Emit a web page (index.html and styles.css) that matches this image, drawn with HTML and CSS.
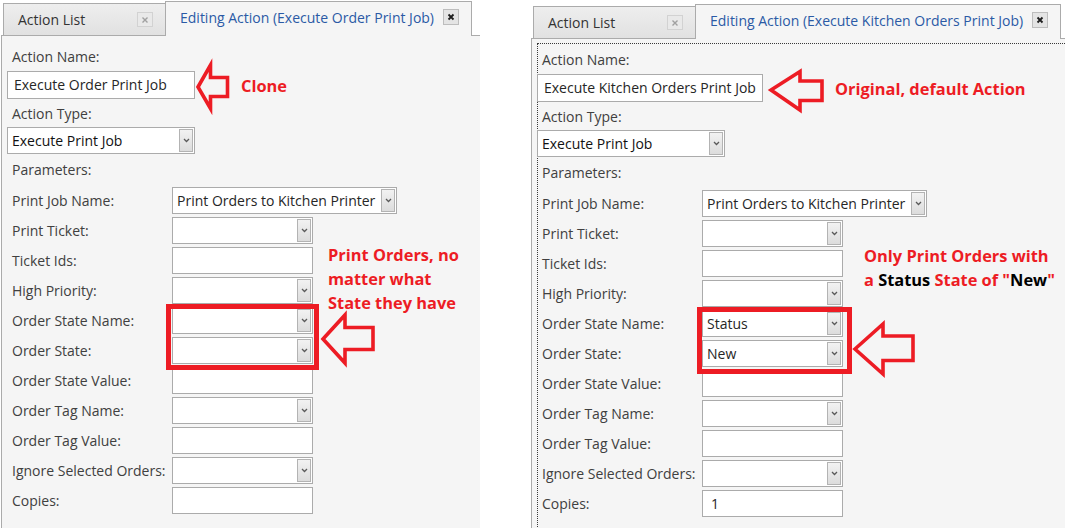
FILE: index.html
```html
<!DOCTYPE html>
<html>
<head>
<meta charset="utf-8">
<link rel="stylesheet" href="styles.css">
</head>
<body>
<div class="screen">
  <section class="panel panel-left">
    <div class="tabs">
      <div class="tab">Action List<span class="close"><svg width="8" height="8" viewBox="0 0 8 8"><path d="M1.5 1.5 L6.5 6.5 M6.5 1.5 L1.5 6.5"/></svg></span></div>
      <div class="tab active">Editing Action (Execute Order Print Job)<span class="close"><svg width="8" height="8" viewBox="0 0 8 8"><path d="M1.5 1.5 L6.5 6.5 M6.5 1.5 L1.5 6.5"/></svg></span></div>
    </div>
    <div class="content">
      <div class="form">
        <div class="lbl first">Action Name:</div>
        <div class="textbox">Execute Order Print Job</div>
        <div class="lbl">Action Type:</div>
        <div class="combo type"><span class="val dark">Execute Print Job</span><span class="btn"><svg width="7" height="5" viewBox="0 0 7 5"><path d="M1 1 L3.5 3.5 L6 1"/></svg></span></div>
        <div class="lbl params-title">Parameters:</div>
        <div class="params">
          <div class="plabel">Print Job Name:</div>
          <div class="combo wide"><span class="val">Print Orders to Kitchen Printer</span><span class="btn"><svg width="7" height="5" viewBox="0 0 7 5"><path d="M1 1 L3.5 3.5 L6 1"/></svg></span></div>
          <div class="plabel">Print Ticket:</div>
          <div class="combo"><span class="val"></span><span class="btn"><svg width="7" height="5" viewBox="0 0 7 5"><path d="M1 1 L3.5 3.5 L6 1"/></svg></span></div>
          <div class="plabel">Ticket Ids:</div>
          <div class="field"></div>
          <div class="plabel">High Priority:</div>
          <div class="combo"><span class="val"></span><span class="btn"><svg width="7" height="5" viewBox="0 0 7 5"><path d="M1 1 L3.5 3.5 L6 1"/></svg></span></div>
          <div class="plabel">Order State Name:</div>
          <div class="combo"><span class="val"></span><span class="btn"><svg width="7" height="5" viewBox="0 0 7 5"><path d="M1 1 L3.5 3.5 L6 1"/></svg></span></div>
          <div class="plabel">Order State:</div>
          <div class="combo"><span class="val"></span><span class="btn"><svg width="7" height="5" viewBox="0 0 7 5"><path d="M1 1 L3.5 3.5 L6 1"/></svg></span></div>
          <div class="plabel">Order State Value:</div>
          <div class="field"></div>
          <div class="plabel">Order Tag Name:</div>
          <div class="combo"><span class="val"></span><span class="btn"><svg width="7" height="5" viewBox="0 0 7 5"><path d="M1 1 L3.5 3.5 L6 1"/></svg></span></div>
          <div class="plabel">Order Tag Value:</div>
          <div class="field"></div>
          <div class="plabel">Ignore Selected Orders:</div>
          <div class="combo"><span class="val"></span><span class="btn"><svg width="7" height="5" viewBox="0 0 7 5"><path d="M1 1 L3.5 3.5 L6 1"/></svg></span></div>
          <div class="plabel">Copies:</div>
          <div class="field"></div>
        </div>
      </div>
    </div>
    <svg class="overlay" width="480" height="528" viewBox="0 0 480 528">
      <rect x="168.5" y="306.5" width="148" height="61"/>
      <polygon points="198,87 210.5,65 210.5,77.5 227.5,77.5 227.5,96.5 210.5,96.5 210.5,108.5"/>
      <polygon points="323,339 345,315 345,327.5 373,327.5 373,349.5 345,349.5 345,363"/>
    </svg>
    <div class="note note-clone">Clone</div>
    <div class="note note-left">Print Orders, no<br>matter what<br>State they have</div>
  </section>

  <section class="panel panel-right">
    <div class="tabs">
      <div class="tab">Action List<span class="close"><svg width="8" height="8" viewBox="0 0 8 8"><path d="M1.5 1.5 L6.5 6.5 M6.5 1.5 L1.5 6.5"/></svg></span></div>
      <div class="tab active">Editing Action (Execute Kitchen Orders Print Job)<span class="close"><svg width="8" height="8" viewBox="0 0 8 8"><path d="M1.5 1.5 L6.5 6.5 M6.5 1.5 L1.5 6.5"/></svg></span></div>
    </div>
    <div class="content">
      <div class="form focused">
        <div class="lbl first">Action Name:</div>
        <div class="textbox">Execute Kitchen Orders Print Job</div>
        <div class="lbl">Action Type:</div>
        <div class="combo type"><span class="val dark">Execute Print Job</span><span class="btn"><svg width="7" height="5" viewBox="0 0 7 5"><path d="M1 1 L3.5 3.5 L6 1"/></svg></span></div>
        <div class="lbl params-title">Parameters:</div>
        <div class="params">
          <div class="plabel">Print Job Name:</div>
          <div class="combo wide"><span class="val">Print Orders to Kitchen Printer</span><span class="btn"><svg width="7" height="5" viewBox="0 0 7 5"><path d="M1 1 L3.5 3.5 L6 1"/></svg></span></div>
          <div class="plabel">Print Ticket:</div>
          <div class="combo"><span class="val"></span><span class="btn"><svg width="7" height="5" viewBox="0 0 7 5"><path d="M1 1 L3.5 3.5 L6 1"/></svg></span></div>
          <div class="plabel">Ticket Ids:</div>
          <div class="field"></div>
          <div class="plabel">High Priority:</div>
          <div class="combo"><span class="val"></span><span class="btn"><svg width="7" height="5" viewBox="0 0 7 5"><path d="M1 1 L3.5 3.5 L6 1"/></svg></span></div>
          <div class="plabel">Order State Name:</div>
          <div class="combo"><span class="val">Status</span><span class="btn"><svg width="7" height="5" viewBox="0 0 7 5"><path d="M1 1 L3.5 3.5 L6 1"/></svg></span></div>
          <div class="plabel">Order State:</div>
          <div class="combo"><span class="val">New</span><span class="btn"><svg width="7" height="5" viewBox="0 0 7 5"><path d="M1 1 L3.5 3.5 L6 1"/></svg></span></div>
          <div class="plabel">Order State Value:</div>
          <div class="field"></div>
          <div class="plabel">Order Tag Name:</div>
          <div class="combo"><span class="val"></span><span class="btn"><svg width="7" height="5" viewBox="0 0 7 5"><path d="M1 1 L3.5 3.5 L6 1"/></svg></span></div>
          <div class="plabel">Order Tag Value:</div>
          <div class="field"></div>
          <div class="plabel">Ignore Selected Orders:</div>
          <div class="combo"><span class="val"></span><span class="btn"><svg width="7" height="5" viewBox="0 0 7 5"><path d="M1 1 L3.5 3.5 L6 1"/></svg></span></div>
          <div class="plabel">Copies:</div>
          <div class="field">1</div>
        </div>
      </div>
    </div>
    <svg class="overlay" width="535" height="525" viewBox="0 0 535 525">
      <rect x="169.5" y="306.5" width="150" height="62"/>
      <polygon points="241,87 270,68.5 270,78 292,78 292,97.5 270,97.5 270,107"/>
      <polygon points="325,346 353,321 353,333 383,333 383,357.5 353,357.5 353,371"/>
    </svg>
    <div class="note note-orig">Original, default Action</div>
    <div class="note note-right">Only Print Orders with<br>a <b>Status</b> State of "<b>New</b>"</div>
  </section>
</div>
</body>
</html>
```

FILE: styles.css
```css
html, body {
  margin: 0;
  padding: 0;
  background: #ffffff;
}

body {
  font-family: "Open Sans", "Liberation Sans", sans-serif;
  font-size: 14px;
  color: #404040;
}

.screen {
  display: flex;
  align-items: flex-start;
  width: 1065px;
  height: 528px;
  overflow: hidden;
}

.panel {
  position: relative;
  display: flex;
  flex-direction: column;
  height: 528px;
  flex: none;
}

.panel-left {
  width: 480px;
}

.panel-right {
  width: 535px;
  margin-left: 50px;
  margin-top: 3px;
  height: 525px;
}

/* ---------- tabs ---------- */
.tabs {
  position: relative;
  z-index: 2;
  display: flex;
  align-items: flex-end;
  height: 35px;
  padding-left: 3px;
}

.tab {
  box-sizing: border-box;
  display: flex;
  align-items: center;
  width: 163px;
  height: 32px;
  padding: 0 12px 0 14px;
  border: 1px solid #ababab;
  border-bottom: none;
  background: linear-gradient(#eeeeee, #e1e1e1);
  color: #333333;
  white-space: nowrap;
}

.tab .close {
  margin-left: auto;
  box-sizing: border-box;
  width: 16px;
  height: 15px;
  display: flex;
  align-items: center;
  justify-content: center;
  border: 1px solid #d2d2d2;
  background: #e9e9e9;
}

.tab .close svg path {
  stroke: #a0a0a0;
  stroke-width: 1.4;
  fill: none;
}

.tab.active {
  position: relative;
  width: auto;
  height: 35px;
  margin-bottom: -1px;
  margin-left: -1px;
  padding: 0 12px 4px 14px;
  background: #f5f5f5;
  color: #2b5aa5;
}

.tab.active .close {
  margin-left: 9px;
  height: 16px;
  border-color: #bdbdbd;
  background: #e4e4e4;
}

.tab.active .close svg path {
  stroke: #1e1e1e;
  stroke-width: 1.8;
}

/* ---------- content ---------- */
.content {
  position: relative;
  z-index: 1;
  flex: 1;
  margin-left: 1px;
  border-top: 1px solid #ababab;
  border-left: 1px solid #ababab;
  background: #f5f5f5;
  overflow: hidden;
}

.form {
  position: relative;
  display: flex;
  flex-direction: column;
  align-items: flex-start;
  padding: 11px 0 0 5px;
}

.form.focused::before {
  content: "";
  position: absolute;
  left: 5px;
  top: 4px;
  right: -20px;
  bottom: -40px;
  border: 1px dotted #3a3a3a;
  pointer-events: none;
}

.lbl {
  height: 20px;
  line-height: 20px;
  padding-left: 5px;
  margin-top: 5px;
}

.lbl.first {
  margin-top: 0;
}

.lbl.params-title {
  margin-top: 6px;
}

.textbox {
  position: relative;
  box-sizing: border-box;
  min-width: 188px;
  height: 28px;
  line-height: 26px;
  margin-top: 4px;
  padding: 0 6px;
  border: 1px solid #ababab;
  background: #ffffff;
  color: #262626;
  white-space: nowrap;
}

.combo {
  position: relative;
  box-sizing: border-box;
  display: flex;
  align-items: stretch;
  width: 141px;
  height: 27px;
  border: 1px solid #ababab;
  background: #ffffff;
}

.combo .val {
  flex: 1;
  line-height: 25px;
  padding-left: 4px;
  color: #262626;
  white-space: nowrap;
  overflow: hidden;
}

.combo .val.dark {
  color: #111111;
}

.combo .btn {
  box-sizing: border-box;
  width: 14px;
  margin: 1px;
  display: flex;
  align-items: center;
  justify-content: center;
  border: 1px solid #b3b3b3;
  background: linear-gradient(#f2f2f2, #dcdcdc);
}

.combo .btn svg path {
  stroke: #5a5a5a;
  stroke-width: 1.3;
  fill: none;
}

.combo.type {
  width: 188px;
  margin-top: 3px;
}

.combo.wide {
  width: 225px;
}

.params {
  display: grid;
  grid-template-columns: 165px auto;
  grid-auto-rows: 27px;
  row-gap: 3px;
  align-items: center;
  margin-top: 7px;
}

.plabel {
  padding-left: 5px;
  line-height: 20px;
  white-space: nowrap;
}

.field {
  box-sizing: border-box;
  width: 141px;
  height: 27px;
  line-height: 25px;
  padding-left: 8px;
  border: 1px solid #ababab;
  background: #ffffff;
  color: #262626;
}

/* ---------- annotations ---------- */
.overlay {
  position: absolute;
  left: 0;
  top: 0;
  z-index: 5;
  pointer-events: none;
}

.overlay rect,
.overlay polygon {
  fill: none;
  stroke: #ed1c24;
}

.overlay rect {
  stroke-width: 5;
}

.overlay polygon {
  stroke-width: 3.6;
  stroke-linejoin: miter;
}

.note {
  position: absolute;
  z-index: 6;
  font-family: "Open Sans", "Liberation Sans", sans-serif;
  font-weight: 700;
  font-size: 16.4px;
  line-height: 24px;
  color: #ed1c24;
  white-space: nowrap;
}

.note b {
  color: #000000;
  font-weight: 700;
}

.note-clone {
  left: 241px;
  top: 74px;
}

.note-left {
  left: 328px;
  top: 243px;
}

.note-orig {
  left: 305px;
  top: 74px;
}

.note-right {
  left: 334px;
  top: 241px;
}
```
